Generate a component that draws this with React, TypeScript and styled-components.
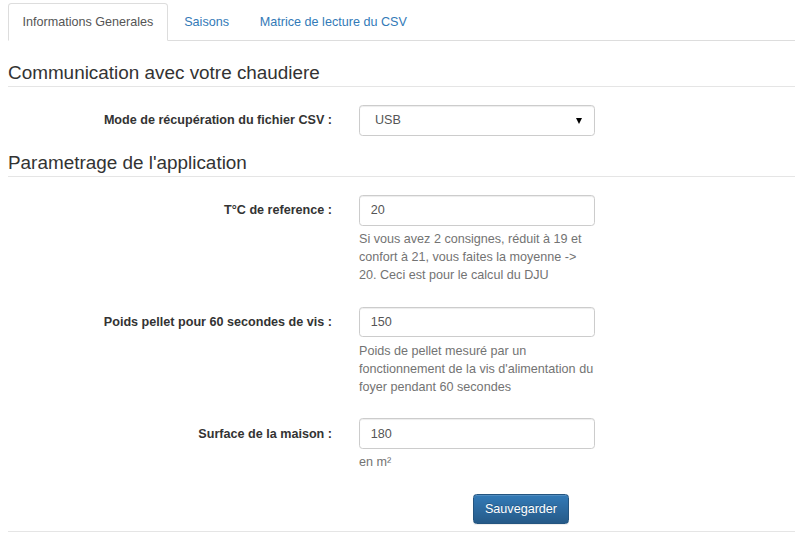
import React from "react";
import styled, { createGlobalStyle } from "styled-components";

const GlobalStyle = createGlobalStyle`
  html, body {
    margin: 0;
    padding: 0;
    background: #fff;
  }
  body {
    font-family: "Liberation Sans", Arial, Helvetica, sans-serif;
    font-size: 12.6px;
    line-height: 18px;
    color: #333;
  }
  * {
    box-sizing: border-box;
  }
`;

const Page = styled.div`
  padding: 3px 0 0 8px;
  width: 795px;
`;

const TabBar = styled.ul`
  display: flex;
  list-style: none;
  margin: 0;
  padding: 0;
  border-bottom: 1px solid #ddd;
`;

const Tab = styled.li<{ $active?: boolean }>`
  margin: 0 1.8px -1px 0;
  padding: 9px 13.5px;
  line-height: 18px;
  border: 1px solid ${(p) => (p.$active ? "#ddd" : "transparent")};
  border-bottom-color: transparent;
  border-radius: 3.6px 3.6px 0 0;
  background: ${(p) => (p.$active ? "#fff" : "transparent")};
  color: ${(p) => (p.$active ? "#555" : "#337ab7")};
  cursor: default;
`;

const Legend = styled.h2<{ $first?: boolean }>`
  margin: ${(p) => (p.$first ? "18px" : "0")} 0 18px 0;
  padding: 0;
  font-size: 18.9px;
  font-weight: normal;
  line-height: 27px;
  color: #333;
  border-bottom: 1px solid #e5e5e5;
`;

const FormRow = styled.div`
  display: grid;
  grid-template-columns: 324px 236px;
  column-gap: 27px;
  margin-bottom: 13.5px;
`;

const Label = styled.label`
  text-align: right;
  font-weight: bold;
  padding-top: 6.3px;
  line-height: 18px;
  color: #333;
`;

const Field = styled.div`
  display: flex;
  flex-direction: column;
`;

const Input = styled.input`
  width: 236px;
  height: 30.6px;
  padding: 5.4px 10.8px;
  font-family: inherit;
  font-size: 12.6px;
  line-height: 18px;
  color: #555;
  background: #fff;
  border: 1px solid #ccc;
  border-radius: 3.6px;
  box-shadow: inset 0 1px 1px rgba(0, 0, 0, 0.075);
  outline: none;
`;

const SelectWrap = styled.div`
  position: relative;
  width: 236px;
`;

const Select = styled.select`
  appearance: none;
  -webkit-appearance: none;
  width: 236px;
  height: 30.6px;
  padding: 5.4px 10.8px 5.4px 15px;
  font-family: inherit;
  font-size: 12.6px;
  line-height: 18px;
  color: #555;
  background: #fff;
  border: 1px solid #ccc;
  border-radius: 3.6px;
  box-shadow: inset 0 1px 1px rgba(0, 0, 0, 0.075);
  outline: none;
`;

const Caret = styled.span`
  position: absolute;
  right: 13px;
  top: 12.5px;
  width: 0;
  height: 0;
  border-left: 3.5px solid transparent;
  border-right: 3.5px solid transparent;
  border-top: 6px solid #000;
  pointer-events: none;
`;

const Help = styled.p`
  margin: 4.5px 0 9px 0;
  color: #737373;
  line-height: 18px;
`;

const ButtonRow = styled.div`
  display: grid;
  grid-template-columns: 324px 236px;
  column-gap: 27px;
  padding-bottom: 7px;
  border-bottom: 1px solid #e5e5e5;
`;

const SaveButton = styled.button`
  grid-column: 2;
  justify-self: start;
  margin-left: 114px;
  width: 96px;
  height: 30.6px;
  padding: 5.4px 10.8px;
  font-family: inherit;
  font-size: 12.6px;
  line-height: 18px;
  color: #fff;
  text-shadow: 0 -1px 0 rgba(0, 0, 0, 0.2);
  background: linear-gradient(to bottom, #337ab7 0%, #265a88 100%);
  border: 1px solid #245580;
  border-radius: 3.6px;
  box-shadow: inset 0 1px 0 rgba(255, 255, 255, 0.15), 0 1px 1px rgba(0, 0, 0, 0.075);
  cursor: pointer;
`;

const tabs = ["Informations Generales", "Saisons", "Matrice de lecture du CSV"];

export default function App() {
  return (
    <>
      <GlobalStyle />
      <Page>
        <TabBar>
          {tabs.map((t, i) => (
            <Tab key={t} $active={i === 0}>
              {t}
            </Tab>
          ))}
        </TabBar>

        <Legend $first>Communication avec votre chaudiere</Legend>
        <FormRow>
          <Label>Mode de récupération du fichier CSV :</Label>
          <Field>
            <SelectWrap>
              <Select defaultValue="USB">
                <option value="USB">USB</option>
              </Select>
              <Caret />
            </SelectWrap>
          </Field>
        </FormRow>

        <Legend>Parametrage de l'application</Legend>
        <FormRow>
          <Label>T°C de reference :</Label>
          <Field>
            <Input defaultValue="20" />
            <Help>
              Si vous avez 2 consignes, réduit à 19 et confort à 21, vous faites la moyenne -&gt; 20. Ceci est pour le
              calcul du DJU
            </Help>
          </Field>
        </FormRow>
        <FormRow>
          <Label>Poids pellet pour 60 secondes de vis :</Label>
          <Field>
            <Input defaultValue="150" />
            <Help>Poids de pellet mesuré par un fonctionnement de la vis d'alimentation du foyer pendant 60 secondes</Help>
          </Field>
        </FormRow>
        <FormRow>
          <Label>Surface de la maison :</Label>
          <Field>
            <Input defaultValue="180" />
            <Help>en m²</Help>
          </Field>
        </FormRow>
        <ButtonRow>
          <SaveButton>Sauvegarder</SaveButton>
        </ButtonRow>
      </Page>
    </>
  );
}
